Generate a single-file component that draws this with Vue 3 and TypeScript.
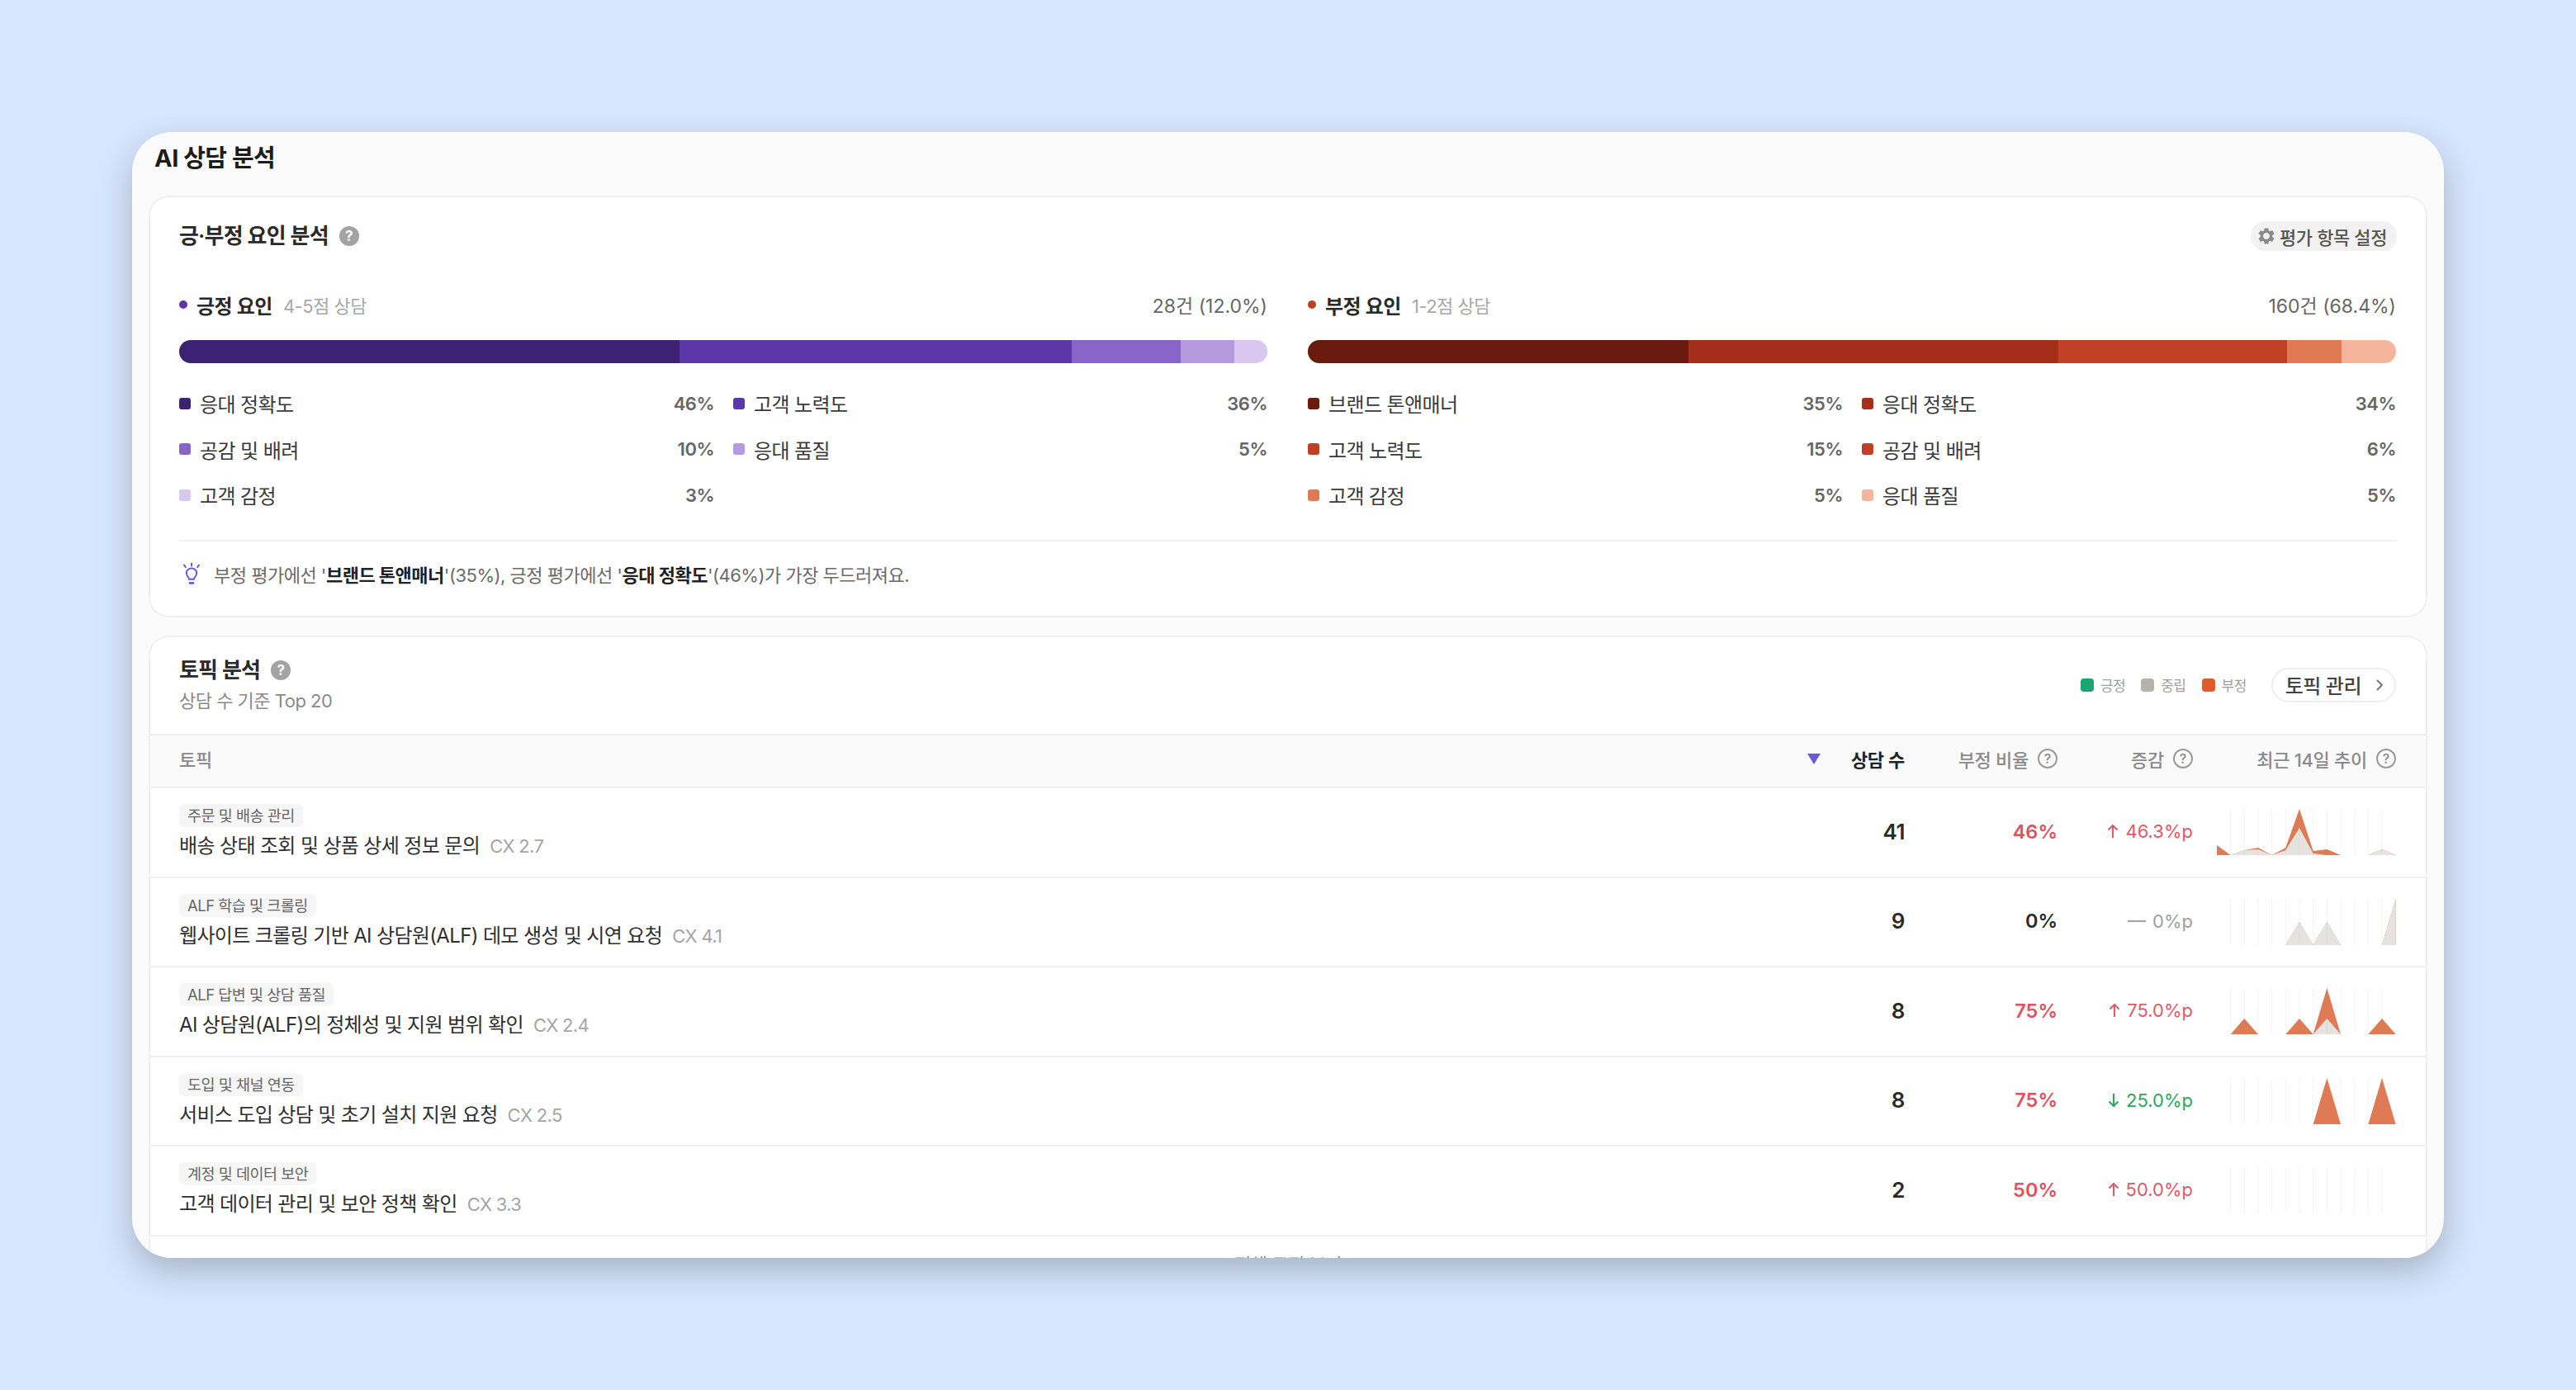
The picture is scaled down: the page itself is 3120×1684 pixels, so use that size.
<script setup lang="ts">
interface Segment {
  label: string
  pct: number
  color: string
}

interface Factor {
  name: string
  range: string
  total: string
  dot: string
  segments: Segment[]
}

interface Topic {
  tag: string
  title: string
  cx: string
  count: number
  ratio: number
  delta: string
  trend: 'up' | 'down' | 'flat'
  neutral: number[]
  total: number[]
}

const factors: Factor[] = [
  {
    name: '긍정 요인',
    range: '4-5점 상담',
    total: '28건 (12.0%)',
    dot: '#5b37a8',
    segments: [
      { label: '응대 정확도', pct: 46, color: '#3d2174' },
      { label: '고객 노력도', pct: 36, color: '#5b37a8' },
      { label: '공감 및 배려', pct: 10, color: '#8865c9' },
      { label: '응대 품질', pct: 5, color: '#b69adf' },
      { label: '고객 감정', pct: 3, color: '#d9c7ef' },
    ],
  },
  {
    name: '부정 요인',
    range: '1-2점 상담',
    total: '160건 (68.4%)',
    dot: '#c04025',
    segments: [
      { label: '브랜드 톤앤매너', pct: 35, color: '#6b1a0e' },
      { label: '응대 정확도', pct: 34, color: '#a42e1a' },
      { label: '고객 노력도', pct: 15, color: '#c04025' },
      { label: '공감 및 배려', pct: 6, color: '#c04025' },
      { label: '고객 감정', pct: 5, color: '#e07a55' },
      { label: '응대 품질', pct: 5, color: '#f4b59c' },
    ],
  },
]

const topics: Topic[] = [
  {
    tag: '주문 및 배송 관리',
    title: '배송 상태 조회 및 상품 상세 정보 문의',
    cx: 'CX 2.7',
    count: 41,
    ratio: 46,
    delta: '46.3%p',
    trend: 'up',
    neutral: [0, 0, 6, 7, 0, 6, 33, 2, 0, 0, 0, 0, 7, 0],
    total: [12, 0, 6, 9, 0, 9, 56, 5, 7, 0, 0, 0, 7, 0],
  },
  {
    tag: 'ALF 학습 및 크롤링',
    title: '웹사이트 크롤링 기반 AI 상담원(ALF) 데모 생성 및 시연 요청',
    cx: 'CX 4.1',
    count: 9,
    ratio: 0,
    delta: '0%p',
    trend: 'flat',
    neutral: [0, 0, 0, 0, 0, 0, 28, 0, 28, 0, 0, 0, 0, 56],
    total: [0, 0, 0, 0, 0, 0, 28, 0, 28, 0, 0, 0, 0, 56],
  },
  {
    tag: 'ALF 답변 및 상담 품질',
    title: 'AI 상담원(ALF)의 정체성 및 지원 범위 확인',
    cx: 'CX 2.4',
    count: 8,
    ratio: 75,
    delta: '75.0%p',
    trend: 'up',
    neutral: [0, 0, 0, 0, 0, 0, 0, 0, 19, 0, 0, 0, 0, 0],
    total: [0, 0, 19, 0, 0, 0, 19, 0, 56, 0, 0, 0, 19, 0],
  },
  {
    tag: '도입 및 채널 연동',
    title: '서비스 도입 상담 및 초기 설치 지원 요청',
    cx: 'CX 2.5',
    count: 8,
    ratio: 75,
    delta: '25.0%p',
    trend: 'down',
    neutral: [0, 0, 0, 0, 0, 0, 0, 0, 0, 0, 0, 0, 0, 0],
    total: [0, 0, 0, 0, 0, 0, 0, 0, 56, 0, 0, 0, 56, 0],
  },
  {
    tag: '계정 및 데이터 보안',
    title: '고객 데이터 관리 및 보안 정책 확인',
    cx: 'CX 3.3',
    count: 2,
    ratio: 50,
    delta: '50.0%p',
    trend: 'up',
    neutral: [0, 0, 0, 0, 0, 0, 0, 0, 0, 0, 0, 0, 0, 0],
    total: [0, 0, 0, 0, 0, 0, 0, 0, 0, 0, 0, 0, 0, 0],
  },
]

const chartStep = 216.7 / 13
const gridLines = Array.from({ length: 12 }, (_, i) => (i + 1) * chartStep)

function areaPath(values: number[]) {
  const points = values.map((v, i) => `L${(i * chartStep).toFixed(1)} ${56 - v}`).join(' ')
  return `M0 56 ${points} L216.7 56 Z`
}
</script>

<template>
  <div class="page">
    <div class="window">
      <h1 class="page-title">AI 상담 분석</h1>

      <section class="card factors">
        <div class="card-head">
          <div class="title-wrap">
            <h2>긍·부정 요인 분석</h2>
            <span class="help-fill">?</span>
          </div>
          <button class="settings">
            <svg width="24" height="24" viewBox="0 0 24 24"><path fill="#8a8a8a" d="M19.14 12.94c.04-.3.06-.61.06-.94 0-.32-.02-.64-.07-.94l2.03-1.58c.18-.14.23-.41.12-.61l-1.92-3.32c-.12-.22-.37-.29-.59-.22l-2.39.96c-.5-.38-1.03-.7-1.62-.94l-.36-2.54c-.04-.24-.24-.41-.48-.41h-3.84c-.24 0-.43.17-.47.41l-.36 2.54c-.59.24-1.13.57-1.62.94l-2.39-.96c-.22-.08-.47 0-.59.22L2.74 8.87c-.12.21-.08.47.12.61l2.03 1.58c-.05.3-.09.63-.09.94s.02.64.07.94l-2.03 1.58c-.18.14-.23.41-.12.61l1.92 3.32c.12.22.37.29.59.22l2.39-.96c.5.38 1.03.7 1.62.94l.36 2.54c.05.24.24.41.48.41h3.84c.24 0 .44-.17.47-.41l.36-2.54c.59-.24 1.13-.56 1.62-.94l2.39.96c.22.08.47 0 .59-.22l1.92-3.32c.12-.22.07-.47-.12-.61l-2.01-1.58zM12 16c-2.2 0-4-1.800-4-4s1.800-4 4-4 4 1.800 4 4-1.800 4-4 4z" /></svg>
            평가 항목 설정
          </button>
        </div>

        <div class="factor-cols">
          <div v-for="f in factors" :key="f.name" class="factor">
            <div class="factor-head">
              <span class="dot" :style="{ background: f.dot }" />
              <strong>{{ f.name }}</strong>
              <span class="range">{{ f.range }}</span>
              <span class="total">{{ f.total }}</span>
            </div>
            <div class="bar">
              <span
                v-for="s in f.segments"
                :key="s.label"
                :style="{ flexGrow: s.pct, background: s.color }"
              />
            </div>
            <div class="legend">
              <div v-for="s in f.segments" :key="s.label" class="legend-item">
                <span class="swatch" :style="{ background: s.color }" />
                <span class="legend-label">{{ s.label }}</span>
                <span class="legend-pct">{{ s.pct }}%</span>
              </div>
            </div>
          </div>
        </div>

        <div class="note">
          <svg width="24" height="28" viewBox="0 0 24 28" fill="none" stroke="#6a5ae0" stroke-width="2" stroke-linecap="round">
            <path d="M12 1.500v3M3 3.500l1.800 2.600M21 3.500l-1.800 2.600" />
            <path d="M12 7.500c-3.700 0-6.200 2.700-6.200 5.900 0 2.300 1.200 3.700 2.300 5 .7.800 1 1.500 1 2.300h5.800c0-.8.3-1.500 1-2.300 1.100-1.300 2.300-2.700 2.300-5 0-3.200-2.500-5.900-6.200-5.900z" />
            <path d="M8.800 24h6.400v1.200c0 .9-.7 1.600-1.600 1.600h-3.200c-.9 0-1.600-.7-1.600-1.600z" fill="#6a5ae0" stroke="none" />
          </svg>
          <p>부정 평가에선 '<b>브랜드 톤앤매너</b>'(35%), 긍정 평가에선 '<b>응대 정확도</b>'(46%)가 가장 두드러져요.</p>
        </div>
      </section>

      <section class="card topics">
        <div class="topics-head">
          <div>
            <div class="title-wrap">
              <h2>토픽 분석</h2>
              <span class="help-fill">?</span>
            </div>
            <p class="sub">상담 수 기준 Top 20</p>
          </div>
          <div class="topics-tools">
            <span class="key"><i style="background: #1ba572" />긍정</span>
            <span class="key"><i style="background: #b5b3a9" />중립</span>
            <span class="key"><i style="background: #e05a2b" />부정</span>
            <button class="manage">
              토픽 관리
              <svg width="12" height="16" viewBox="0 0 12 16" fill="none" stroke="#777" stroke-width="2" stroke-linecap="round" stroke-linejoin="round"><path d="M3.500 2.500l5.500 5.500-5.500 5.500" /></svg>
            </button>
          </div>
        </div>

        <div class="row table-head">
          <div>토픽</div>
          <div class="col-count"><span class="sort" /><b>상담 수</b></div>
          <div class="col-end">부정 비율 <span class="help-line">?</span></div>
          <div class="col-end">증감 <span class="help-line">?</span></div>
          <div class="col-end">최근 14일 추이 <span class="help-line">?</span></div>
        </div>

        <div v-for="t in topics" :key="t.title" class="row topic-row">
          <div class="topic">
            <span class="tag">{{ t.tag }}</span>
            <div class="topic-title">{{ t.title }}<span class="cx">{{ t.cx }}</span></div>
          </div>
          <div class="count">{{ t.count }}</div>
          <div class="ratio" :class="{ zero: t.ratio === 0 }">{{ t.ratio }}%</div>
          <div class="delta" :class="t.trend">
            <svg v-if="t.trend === 'up'" width="14" height="18" viewBox="0 0 14 18" fill="none" stroke="currentColor" stroke-width="2"><path d="M7 17V2M1.500 7.500L7 2l5.500 5.500" /></svg>
            <svg v-else-if="t.trend === 'down'" width="14" height="18" viewBox="0 0 14 18" fill="none" stroke="currentColor" stroke-width="2"><path d="M7 1v15M1.500 10.500L7 16l5.500-5.500" /></svg>
            <svg v-else width="22" height="18" viewBox="0 0 22 18" fill="none" stroke="currentColor" stroke-width="2"><path d="M0 9h22" /></svg>
            {{ t.delta }}
          </div>
          <div class="spark">
            <svg width="217" height="56" viewBox="0 0 217 56">
              <path :d="areaPath(t.total)" fill="#e07a55" />
              <path :d="areaPath(t.neutral)" fill="#e4e3df" />
              <line v-for="x in gridLines" :key="x" :x1="x" :x2="x" y1="0" y2="56" stroke="#9a9a90" stroke-opacity="0.12" />
            </svg>
          </div>
        </div>

        <div class="more">전체 토픽 보기</div>
      </section>
    </div>
  </div>
</template>

<style scoped>
.page {
  box-sizing: border-box;
  height: 1684px;
  padding: 160px;
  overflow: hidden;
}

.window {
  box-sizing: border-box;
  height: 1364px;
  padding: 16px 20px 0;
  overflow: hidden;
  border-radius: 48px;
  background: #fbfbfb;
  box-shadow: 0 16px 40px rgba(0, 0, 0, 0.22);
  color: #222;
  font-family: Inter, "Noto Sans CJK KR", sans-serif;
  letter-spacing: -0.5px;
}

.page-title {
  margin: 0 0 29px 7px;
  font-size: 29px;
  font-weight: 700;
  line-height: 32px;
  color: #1c1c1c;
}

.card {
  box-sizing: border-box;
  border: 2px solid #f0f0f0;
  border-radius: 24px;
  background: #fff;
}

.factors {
  height: 511px;
  margin-bottom: 22px;
  padding: 30px 35px 0;
}

.card-head {
  display: flex;
  align-items: center;
  justify-content: space-between;
  height: 34px;
}

.title-wrap {
  display: flex;
  align-items: center;
  gap: 13px;
  height: 32px;
}

h2 {
  margin: 0;
  font-size: 26px;
  font-weight: 600;
  line-height: 32px;
  letter-spacing: -0.8px;
  color: #2a2a2a;
}

.help-fill {
  display: flex;
  align-items: center;
  justify-content: center;
  width: 24px;
  height: 24px;
  border-radius: 50%;
  background: #a3a3a3;
  color: #fff;
  font-size: 17px;
  font-weight: 700;
  letter-spacing: 0;
}

.settings {
  display: flex;
  align-items: center;
  gap: 4px;
  height: 36px;
  padding: 0 12px 0 7px;
  border: 0;
  border-radius: 18px;
  background: #f2f2f2;
  color: #555;
  font-family: inherit;
  font-size: 22px;
  font-weight: 500;
  letter-spacing: -0.4px;
}

.factor-cols {
  display: grid;
  grid-template-columns: 1318px 1318px;
  gap: 49px;
  margin-top: 50px;
}

.factor-head {
  display: flex;
  align-items: center;
  height: 32px;
}

.dot {
  width: 10px;
  height: 10px;
  margin-right: 11px;
  border-radius: 50%;
}

.factor-head strong {
  font-size: 24px;
  font-weight: 600;
  color: #2a2a2a;
}

.range {
  margin-left: 13px;
  font-size: 22px;
  color: #a8a8a8;
}

.total {
  margin-left: auto;
  font-size: 23px;
  letter-spacing: 0;
  color: #666;
}

.bar {
  display: flex;
  height: 28px;
  margin-top: 27px;
  overflow: hidden;
  border-radius: 14px;
}

.bar span {
  flex: 0 0 0;
}

.legend {
  display: grid;
  grid-template-columns: 648px 647px;
  column-gap: 23px;
  margin-top: 21px;
}

.legend-item {
  display: flex;
  align-items: center;
  height: 55.5px;
}

.swatch {
  width: 14px;
  height: 14px;
  margin-right: 11px;
  border-radius: 3px;
}

.legend-label {
  font-size: 24px;
  letter-spacing: -0.6px;
  color: #3a3a3a;
}

.legend-pct {
  margin-left: auto;
  font-size: 22px;
  font-weight: 600;
  color: #666;
}

.note {
  display: flex;
  align-items: center;
  gap: 15px;
  height: 32px;
  margin-top: 26px;
  padding-top: 23px;
  border-top: 2px solid #f0f0f0;
}

.note svg {
  margin-left: 3px;
}

.note p {
  margin: 0;
  font-size: 22px;
  color: #6b6b6b;
}

.note b {
  font-weight: 700;
  color: #222;
}

.topics {
  height: 800px;
}

.topics-head {
  display: flex;
  align-items: center;
  justify-content: space-between;
  box-sizing: border-box;
  height: 117px;
  padding: 0 36px 2px 35px;
}

.sub {
  margin: 6px 0 0;
  font-size: 22px;
  line-height: 30px;
  color: #8a8a8a;
}

.topics-tools {
  display: flex;
  align-items: center;
}

.key {
  display: flex;
  align-items: center;
  gap: 8px;
  margin-right: 19px;
  font-size: 17px;
  color: #a0a0a0;
}

.key i {
  width: 16px;
  height: 16px;
  border-radius: 4px;
}

.key:nth-child(3) {
  margin-right: 30px;
}

.manage {
  display: flex;
  align-items: center;
  gap: 16px;
  box-sizing: border-box;
  height: 42px;
  padding: 0 12px 0 15px;
  border: 2px solid #eee;
  border-radius: 21px;
  background: #fff;
  color: #444;
  font-family: inherit;
  font-size: 24px;
  font-weight: 500;
  letter-spacing: -0.5px;
}

.row {
  display: grid;
  grid-template-columns: 1fr 130px 185px 164px 246px;
  align-items: center;
  box-sizing: border-box;
  padding: 0 36px 0 35px;
}

.table-head {
  height: 66px;
  padding-bottom: 6px;
  border-top: 2px solid #efefef;
  border-bottom: 2px solid #efefef;
  background: #fafafa;
  font-size: 22px;
  font-weight: 500;
  letter-spacing: -0.3px;
  color: #8a8a8a;
}

.col-count {
  display: flex;
  align-items: center;
  justify-content: flex-end;
  gap: 37px;
  white-space: nowrap;
}

.col-count b {
  font-weight: 600;
  color: #222;
}

.sort {
  width: 0;
  height: 0;
  border-top: 13px solid #6a5ae0;
  border-right: 8px solid transparent;
  border-left: 8px solid transparent;
}

.col-end {
  display: flex;
  align-items: center;
  justify-content: flex-end;
  gap: 11px;
  white-space: nowrap;
}

.help-line {
  display: flex;
  align-items: center;
  justify-content: center;
  box-sizing: border-box;
  width: 24px;
  height: 24px;
  border: 2px solid #9a9a9a;
  border-radius: 50%;
  color: #8a8a8a;
  font-size: 16px;
  font-weight: 500;
  letter-spacing: 0;
}

.topic-row {
  height: 108.5px;
  border-bottom: 2px solid #f0f0f0;
}

.topic {
  display: flex;
  flex-direction: column;
  align-items: flex-start;
  gap: 6px;
}

.tag {
  height: 28px;
  padding: 0 10px;
  border-radius: 6px;
  background: #f6f6f6;
  font-size: 18.5px;
  line-height: 28px;
  color: #666;
}

.topic-title {
  font-size: 24px;
  line-height: 34px;
  letter-spacing: -0.65px;
  color: #2f2f2f;
}

.cx {
  margin-left: 12px;
  font-size: 22px;
  color: #a5a5a5;
}

.count {
  padding-bottom: 2px;
  font-size: 26px;
  font-weight: 600;
  text-align: right;
  color: #2a2a2a;
}

.ratio {
  padding-bottom: 2px;
  font-size: 23.5px;
  font-weight: 600;
  text-align: right;
  color: #e0525f;
  letter-spacing: 0;
}

.ratio.zero {
  color: #2a2a2a;
}

.delta {
  display: flex;
  align-items: center;
  justify-content: flex-end;
  gap: 8px;
  padding-bottom: 2px;
  font-size: 22px;
  letter-spacing: 0;
}

.delta.up {
  color: #e0596a;
}

.delta.down {
  color: #27a85f;
}

.delta.flat {
  color: #a0a0a0;
}

.spark {
  display: flex;
  justify-content: flex-end;
}

.more {
  padding-top: 16px;
  font-size: 22px;
  text-align: center;
  color: #8a8a8a;
}
</style>

<style>
html,
body {
  margin: 0;
  background: #d6e6fd;
}
</style>
